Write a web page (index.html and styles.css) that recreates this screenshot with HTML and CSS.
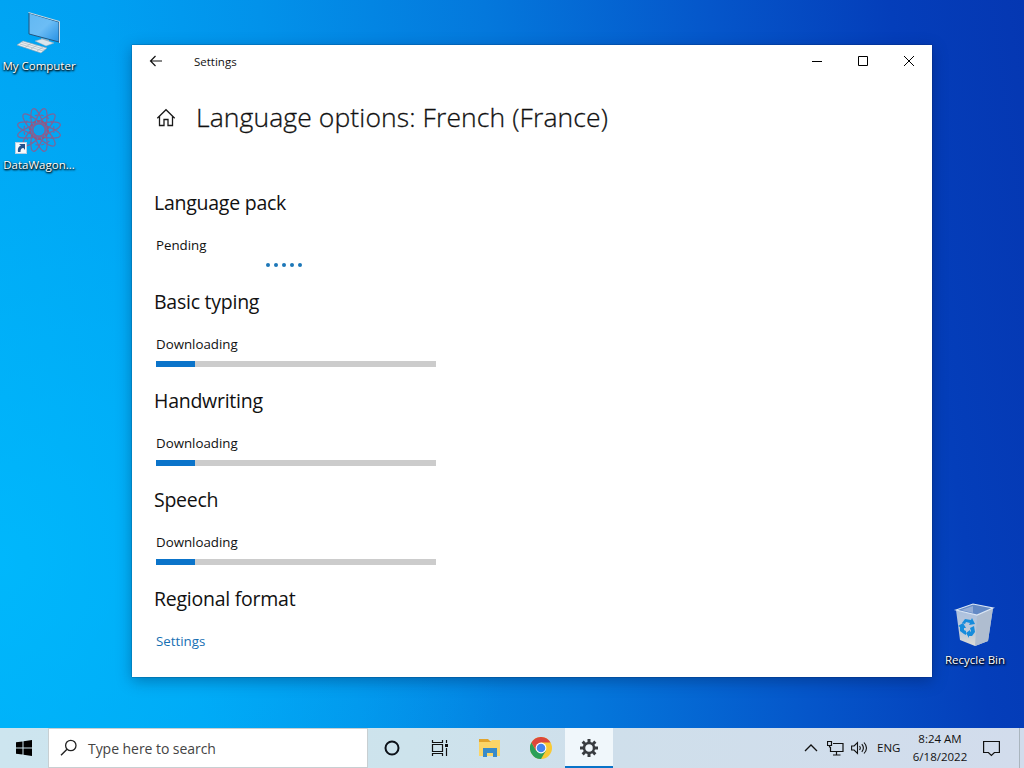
FILE: index.html
```html
<!DOCTYPE html>
<html lang="en">
<head>
    <meta charset="UTF-8">
    <meta name="viewport" content="width=device-width, initial-scale=1.0">
    <title>Settings</title>
    <link rel="stylesheet" href="styles.css">
</head>
<body>
    <div class="desktop">
        <div class="shortcut computer">
            <svg width="48" height="48" viewBox="0 0 48 48">
                <defs>
                    <linearGradient id="screen" x1="0" y1="0" x2="1" y2="1">
                        <stop offset="0" stop-color="#62b8f2"/>
                        <stop offset=".5" stop-color="#6cbdf5"/>
                        <stop offset="1" stop-color="#2590e4"/>
                    </linearGradient>
                </defs>
                <path d="M14 4l30 9v20l-30-8z" fill="url(#screen)" stroke="#23557f"/>
                <path d="M13.500 3.500L44.500 12.500V34" fill="none" stroke="#c8dbe6"/>
                <path d="M26 29l8 2 0 3-7-2z" fill="#9bb4c5"/>
                <path d="M20 32l7-2 12 4-8 3z" fill="#dce6ec" stroke="#93a9b8" stroke-width=".5"/>
                <path d="M2 36l6-4 24 7-6 5z" fill="#e9eef1" stroke="#8fa3b1" stroke-width=".6"/>
                <path d="M5 35l23 7M7 33.500l23 7M10 38.500l6-4M16 40l6-4M22 42l6-4" stroke="#a9b8c2" stroke-width=".7"/>
            </svg>
            <span>My Computer</span>
        </div>
        <div class="shortcut datawagon">
            <svg width="48" height="48" viewBox="0 0 48 48">
                <g fill="none" stroke="#965888" stroke-width="1.200" opacity=".85">
                    <ellipse cx="24" cy="22" rx="22" ry="6" transform="rotate(15 24 22)"/>
                    <ellipse cx="24" cy="22" rx="22" ry="6" transform="rotate(45 24 22)"/>
                    <ellipse cx="24" cy="22" rx="22" ry="6" transform="rotate(75 24 22)"/>
                    <ellipse cx="24" cy="22" rx="22" ry="6" transform="rotate(105 24 22)"/>
                    <ellipse cx="24" cy="22" rx="22" ry="6" transform="rotate(135 24 22)"/>
                    <ellipse cx="24" cy="22" rx="22" ry="6" transform="rotate(165 24 22)"/>
                    <circle cx="24" cy="22" r="15" stroke-dasharray="3 3"/>
                    <circle cx="24" cy="22" r="9" stroke="#a84c70" stroke-width="2" stroke-dasharray="3 1"/>
                </g>
                <circle cx="24" cy="22" r="4" fill="#179ce8"/>
                <rect x="0.500" y="34.500" width="11" height="11" fill="#f5f8fb" stroke="#b8cfe2"/>
                <path d="M3 44c-.5-4 1-6 3-6.500L4 36h6v6l-1.500-2c-2.500 0-3 2-3 4z" fill="#23538d"/>
            </svg>
            <span>DataWagon...</span>
        </div>
        <div class="shortcut recycle">
            <svg width="48" height="48" viewBox="0 0 48 48">
                <defs>
                    <linearGradient id="bin" x1="0" y1="0" x2="0" y2="1">
                        <stop offset="0" stop-color="#a9bfe0"/>
                        <stop offset=".7" stop-color="#c2ccd8"/>
                        <stop offset="1" stop-color="#dfddd5"/>
                    </linearGradient>
                </defs>
                <path d="M5 7l21 5 16-7-5 33-13 5-15-6z" fill="url(#bin)"/>
                <path d="M26 12l16-7-5 33-13 5z" fill="#afbdd0"/>
                <path d="M5 7l17-6 20 4-16 7z" fill="#6389c5" stroke="#dce7f4" stroke-width="1.200"/>
                <path d="M10 7l12-4 0 7z" fill="#93acd6"/>
                <g fill="#168cdc">
                    <path d="M11 20l3-4 6 1 1-2 3 6-6 1 1-2-4-1-1 2z"/>
                    <path d="M19 25l4-2 1 6-3 4-3 0 0 2-3-5 4-3 0 2 1-1z"/>
                    <path d="M13 31l-4-3 0-4-2-1 5-3 3 5-2 0 0 2 2 1 0 4z"/>
                </g>
            </svg>
            <span>Recycle Bin</span>
        </div>

        <div class="window">
            <header class="titlebar">
                <svg class="back" width="14" height="12" viewBox="0 0 14 12"><path d="M13 6H1.500M6.500 1L1.500 6l5 5" fill="none" stroke="#111" stroke-width="1.200"/></svg>
                <span class="app-name">Settings</span>
                <div class="window-buttons">
                    <svg width="46" height="32" viewBox="0 0 46 32"><path d="M18 16.500h10" stroke="#000"/></svg>
                    <svg width="46" height="32" viewBox="0 0 46 32"><path d="M18.500 11.500h9v9h-9z" fill="none" stroke="#000"/></svg>
                    <svg width="46" height="32" viewBox="0 0 46 32"><path d="M18 11l10 10M28 11L18 21" stroke="#000"/></svg>
                </div>
            </header>
            <div class="page-title">
                <svg width="20" height="19" viewBox="0 0 20 19"><path d="M1.300 10.200L10 1.700l8.700 8.500M3.500 8.500v9H8v-6h4v6h4.500v-9" fill="none" stroke="#1a1a1a" stroke-width="1.300"/></svg>
                <h1>Language options: French (France)</h1>
            </div>
            <main>
                <section>
                    <h2>Language pack</h2>
                    <p>Pending</p>
                    <div class="dots"><i></i><i></i><i></i><i></i><i></i></div>
                </section>
                <section>
                    <h2>Basic typing</h2>
                    <p>Downloading</p>
                    <div class="progress"><div class="bar" style="width: 14%"></div></div>
                </section>
                <section>
                    <h2>Handwriting</h2>
                    <p>Downloading</p>
                    <div class="progress"><div class="bar" style="width: 14%"></div></div>
                </section>
                <section>
                    <h2>Speech</h2>
                    <p>Downloading</p>
                    <div class="progress"><div class="bar" style="width: 14%"></div></div>
                </section>
                <section>
                    <h2>Regional format</h2>
                    <p><a href="#">Settings</a></p>
                </section>
            </main>
        </div>
    </div>

    <footer class="taskbar">
        <div class="task">
            <svg width="16" height="16" viewBox="0 0 16 16"><path d="M0 2.300L6.500 1.400v6.100H0zM7.500 1.200L16 0v7.500H7.500zM0 8.500h6.500v6.100L0 13.700zM7.500 8.500H16V16l-8.500-1.200z" fill="#000"/></svg>
        </div>
        <div class="search">
            <svg width="18" height="18" viewBox="0 0 18 18"><circle cx="10.800" cy="6.500" r="5.200" fill="none" stroke="#222" stroke-width="1.300"/><path d="M7 10.300L1 16.300" stroke="#222" stroke-width="1.400"/></svg>
            <span>Type here to search</span>
        </div>
        <div class="task">
            <svg width="16" height="16" viewBox="0 0 16 16"><circle cx="8" cy="8" r="6.500" fill="none" stroke="#0c1118" stroke-width="2"/></svg>
        </div>
        <div class="task">
            <svg width="18" height="16" viewBox="0 0 18 16"><path d="M1.500 0v2.500h10V0M1.500 16v-2.500h10V16M1.500 4.500h10v7h-10zM15.500 0v3M15.500 8v8" fill="none" stroke="#111" stroke-width="1.200"/><path d="M14 4h3v3h-3z" fill="#111"/></svg>
        </div>
        <div class="task explorer">
            <svg width="22" height="20" viewBox="0 0 22 20">
                <path d="M0 1h9l2 2h9v3H0z" fill="#e2a42c"/>
                <path d="M0 4h11l2-2h8v16H0z" fill="#fbd567"/>
                <path d="M4 19V10h14v9h-4v-4H8v4z" fill="#398bc9"/>
            </svg>
        </div>
        <div class="task chrome">
            <svg width="22" height="22" viewBox="0 0 22 22">
                <circle cx="11" cy="11" r="11" fill="#f9c933"/>
                <path d="M11 11L1.470 5.500A11 11 0 0 1 20.530 5.500H11z" fill="#dc473b"/>
                <path d="M1.470 5.500A11 11 0 0 0 11 22l4.800-8.200L11 11 6.200 13.800z" fill="#2b9f58"/>
                <path d="M1.470 5.500L6.200 13.800 11 11V5.500z" fill="#dc473b"/>
                <circle cx="11" cy="11" r="5.400" fill="#fff"/>
                <circle cx="11" cy="11" r="4.300" fill="#4484ed"/>
            </svg>
        </div>
        <div class="task active">
            <svg width="18" height="18" viewBox="0 0 18 18">
                <g stroke="#383c40" stroke-width="3">
                    <path d="M9 0v4M9 14v4M0 9h4M14 9h4"/>
                    <path d="M2.640 2.640l2.800 2.800M12.560 12.560l2.800 2.800M15.360 2.640l-2.800 2.800M5.440 12.560l-2.800 2.800"/>
                </g>
                <circle cx="9" cy="9" r="5" fill="none" stroke="#383c40" stroke-width="2.500"/>
            </svg>
        </div>
        <div class="tray">
            <svg width="14" height="8" viewBox="0 0 14 8"><path d="M1 7l6-6 6 6" fill="none" stroke="#111" stroke-width="1.300"/></svg>
            <svg class="network" width="17" height="15" viewBox="0 0 17 15"><path d="M6 2.500h10v8H3.500V6M9.500 10.500V14M6 14h7.500M.5.500h4v4h-4zM2.500 4.500V6h1" fill="none" stroke="#111" stroke-width="1.200"/></svg>
            <svg class="volume" width="17" height="14" viewBox="0 0 17 14"><path d="M.6 5h2.500L6.500 1.500v11L3.100 9H.6zM8.500 5q1.600 2 0 4M10.800 3.200q3.200 3.800 0 7.600M13 1.500q5 5.500 0 11" fill="none" stroke="#111" stroke-width="1.100"/></svg>
            <span class="lang">ENG</span>
            <div class="clock">
                <span>8:24 AM</span>
                <span>6/18/2022</span>
            </div>
            <svg class="action" width="17" height="17" viewBox="0 0 17 17"><path d="M.6 1.500h15.800v11h-5l-3 3-3-3H.6z" fill="none" stroke="#111" stroke-width="1.200"/></svg>
            <div class="show-desktop"></div>
        </div>
    </footer>
</body>
</html>
```
FILE: styles.css
```css
* {
    box-sizing: border-box;
}
body {
    width: 1024px;
    height: 768px;
    margin: 0;
    overflow: hidden;
    display: flex;
    flex-direction: column;
    font-family: "Open Sans", "Noto Sans", sans-serif;
    color: #111;
}
svg {
    display: block;
    flex: none;
}
.desktop {
    position: relative;
    height: 728px;
    background:
        radial-gradient(ellipse 520px 560px at 0 560px, rgba(0, 190, 255, .7), rgba(0, 185, 255, 0)),
        linear-gradient(82deg, #00a8f4 0%, #00a0f2 18%, #0292ea 32%, #0478dc 52%, #0556ca 72%, #043eba 88%, #0537b2 100%);
}

/* desktop icons */
.shortcut {
    position: absolute;
    width: 80px;
    display: flex;
    flex-direction: column;
    align-items: center;
    color: #fff;
    font-size: 11.5px;
    line-height: 18px;
    white-space: nowrap;
    text-shadow: 1px 1px 2px #000, 0 1px 2px #000;
}
.computer {
    left: -1px;
    top: 9px;
}
.datawagon {
    left: -1px;
    top: 108px;
}
.recycle {
    left: 935px;
    top: 603px;
}

/* settings window */
.window {
    position: absolute;
    left: 132px;
    top: 45px;
    width: 800px;
    height: 632px;
    background-color: #fff;
    box-shadow: 0 0 1px rgba(0, 20, 50, .8), 0 4px 14px rgba(0, 20, 60, .35);
}
.titlebar {
    display: flex;
    align-items: center;
    height: 32px;
    padding-left: 17px;
}
.app-name {
    margin-left: 31px;
    padding-top: 2px;
    font-size: 11.5px;
    line-height: 32px;
}
.window-buttons {
    display: flex;
    margin-left: auto;
}
.page-title {
    display: flex;
    align-items: center;
    height: 80px;
    padding-left: 24px;
    gap: 20px;
}
h1 {
    margin: 0;
    font-size: 26.5px;
    font-weight: 300;
    line-height: 40px;
    letter-spacing: 0.1px;
    white-space: nowrap;
    -webkit-text-stroke: 0.3px #111;
}
main {
    padding: 32px 0 0 24px;
}
section {
    height: 99px;
}
h2 {
    margin: 0 0 18px -2px;
    font-size: 19.5px;
    font-weight: 400;
    line-height: 28px;
    letter-spacing: -0.25px;
}
p {
    margin: 0 0 7px;
    font-size: 13.3px;
    line-height: 20px;
}
a {
    color: #1770b3;
    text-decoration: none;
}
.dots {
    display: flex;
    gap: 4px;
    padding: 1px 0 0 110px;
}
.dots i {
    width: 4px;
    height: 4px;
    border-radius: 50%;
    background-color: #1c77b8;
}
.progress {
    width: 280px;
    height: 6px;
    background-color: #ccc;
}
.bar {
    height: 6px;
    background-color: #0b74ca;
}

/* taskbar */
.taskbar {
    display: flex;
    height: 40px;
    background: linear-gradient(90deg, #cde5ef 0%, #cde3ec 40%, #cfdfeb 60%, #d2dcec 100%);
}
.task {
    display: flex;
    align-items: center;
    justify-content: center;
    width: 48px;
}
.explorer {
    width: 52px;
}
.chrome {
    width: 49px;
}
.search {
    display: flex;
    align-items: center;
    width: 320px;
    gap: 10px;
    padding-left: 11px;
    border: 1px solid #c8cfd2;
    background-color: #fff;
    color: #444;
    font-size: 14px;
    letter-spacing: -0.05px;
}
.active {
    padding-top: 2px;
    background-color: #f0f7fb;
    border-bottom: 2px solid #0873c8;
}
.tray {
    display: flex;
    align-items: center;
    margin-left: auto;
}
.network {
    margin-left: 9px;
}
.volume {
    margin-left: 7px;
}
.lang {
    width: 26px;
    margin-left: 9px;
    padding-bottom: 1px;
    font-size: 11.5px;
}
.clock {
    display: flex;
    flex-direction: column;
    align-items: center;
    width: 56px;
    margin-left: 9px;
    font-size: 11.5px;
    line-height: 18px;
    white-space: nowrap;
}
.action {
    margin-left: 15px;
}
.show-desktop {
    width: 5px;
    height: 40px;
    margin-left: 19px;
    border-left: 1px solid #aab5be;
}
```
